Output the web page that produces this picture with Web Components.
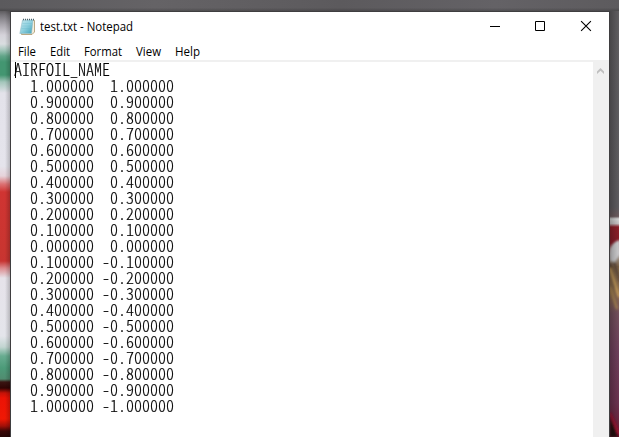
<!DOCTYPE html>
<html lang="en">
<head>
<meta charset="utf-8">
<title>test.txt - Notepad</title>
<style>
html,body{margin:0;height:100%;overflow:hidden}
body{font:12px "Open Sans","Noto Sans",sans-serif;color:#000}
</style>
</head>
<body>
<desk-top>
  <notepad-window>
    <title-bar slot="title">test.txt - Notepad</title-bar>
    <menu-bar slot="menu">
      <menu-item style="--w:18px;--g:14px">File</menu-item>
      <menu-item style="--w:20px;--g:14px">Edit</menu-item>
      <menu-item style="--w:38px;--g:14px">Format</menu-item>
      <menu-item style="--w:25px;--g:14px">View</menu-item>
      <menu-item style="--w:25px;--g:0px">Help</menu-item>
    </menu-bar>
    <text-editor></text-editor>
    <scroll-bar slot="scroll"></scroll-bar>
  </notepad-window>
</desk-top>
<script>
const define = (name, html, init) => customElements.define(name, class extends HTMLElement {
  constructor() {
    super();
    this.attachShadow({ mode: 'open' }).innerHTML = html;
    if (init) init(this);
  }
});

define('desk-top', `
<style>
:host{display:grid;grid-template:11px 1fr / 10px 600px 9px;width:619px;height:437px;overflow:hidden;background:#5f5d60}
.top{grid-column:1/4;background:linear-gradient(#0000 70%,#0003),linear-gradient(90deg,#5b5a5d,#656366 25%,#5c5a5d 55%,#646266 80%,#5d5b5e)}
.left{background:linear-gradient(90deg,transparent 50%,#0003),linear-gradient(#5e5c5f 0,#77757a 4px,#aaa7ae 14px,#d5d3da 24px,#d9dde0 33px,#a4c6bb 39px,#62a589 45px,#439671 51px,#439671 64px,#a4c6bb 71px,#e3e2ea 82px,#e5e4ec 155px,#e6d3da 165px,#dc7274 173px,#d03432 181px,#c93530 240px,#c83431 250px,#dc8a8d 257px,#e6e3ea 267px,#e4e5eb 325px,#c2d5d1 336px,#68ac90 345px,#4c9b79 357px,#518c70 368px,#3a1512 371px,#300504 377px,#c61207 382px,#ec1305 387px,#f01804 408px,#a21008 415px,#3b0706 420px,#250505 426px)}
svg{display:block}
</style>
<div class="top"></div><div class="left"></div><slot></slot>
<svg width="9" height="426" viewBox="610 11 9 426">
  <defs>
    <linearGradient id="b" x1="0" y1="0" x2="0" y2="1">
      <stop offset="0" stop-color="#605e61"/><stop offset=".46" stop-color="#5e5c60"/><stop offset=".482" stop-color="#6c5b5e"/>
      <stop offset=".488" stop-color="#d5d6d6"/><stop offset=".499" stop-color="#c6c2c3"/><stop offset=".507" stop-color="#8c1f29"/>
      <stop offset=".545" stop-color="#861d29"/><stop offset=".57" stop-color="#aaa3a2"/><stop offset=".6" stop-color="#7a6044"/>
      <stop offset=".66" stop-color="#8d6e4c"/><stop offset=".71" stop-color="#74505d"/><stop offset=".8" stop-color="#6f405c"/>
      <stop offset=".92" stop-color="#6c3350"/><stop offset="1" stop-color="#6b1a2f"/>
    </linearGradient>
    <linearGradient id="s"><stop offset="0" stop-opacity=".25"/><stop offset="1" stop-opacity="0"/></linearGradient>
    <filter id="f"><feGaussianBlur stdDeviation=".8"/></filter>
  </defs>
  <rect x="610" y="11" width="9" height="426" fill="url(#b)"/>
  <g filter="url(#f)" fill="none">
    <path d="M610 261V249Q613 241 620 240V254L615 262Z" fill="#cbcbcd"/>
    <path d="M610 263L615 288M614 262L620 282" stroke="#4e3c36" stroke-width="1.5"/>
    <path d="M610 268L619 297" stroke="#d8ac62" stroke-width="1.8"/>
    <path d="M610 287L617 309" stroke="#b08c54" stroke-width="2"/>
    <path d="M610 417L618 437H610Z" fill="#24070d"/>
    <path d="M610 413L619 434" stroke="#a30f2d" stroke-width="2"/>
  </g>
  <rect x="610" y="11" width="9" height="426" fill="url(#s)"/>
</svg>`);

define('notepad-window', `
<style>
:host{display:grid;box-sizing:border-box;grid-template:30px 18px 2px 1fr / 1fr 16px;border:1px solid #3f3e40;border-bottom:0;background:#fff;min-height:0}
slot[name=title]::slotted(*),slot[name=menu]::slotted(*){grid-column:1/3}
.rule{grid-column:1/3;background:#f0f0f0}
</style>
<slot name="title"></slot><slot name="menu"></slot><div class="rule"></div><slot></slot><slot name="scroll"></slot>`);

define('title-bar', `
<style>
:host{display:flex;height:30px;align-items:center}
.icon{margin:0 4px 0 8px;flex:none}
.t{flex:1;line-height:30px}
.t svg{display:block}
.b{flex:none}
</style>
<svg class="icon" width="17" height="18" viewBox="0 0 17 18">
  <defs><linearGradient id="p" x1="0" y1="0" x2="1" y2="1"><stop offset="0" stop-color="#c7e8ef"/><stop offset=".5" stop-color="#8fd0de"/><stop offset="1" stop-color="#3f9fb6"/></linearGradient></defs>
  <path d="M4 2.5H15.5V14L13 16.5H2.5Z" fill="#f5eedb" stroke="#a79468" stroke-width=".8"/>
  <path d="M3.5 2H14L12.5 15.5H.8Z" fill="url(#p)" stroke="#8bb7c2" stroke-width=".5"/>
  <path d="M3.5 5.5H13M3 8H12.6M2.6 10.5H12.2" stroke="#64b5c8" stroke-width=".5" opacity=".6"/>
  <path d="M4 1.5H15" stroke="#49616a" stroke-width="1.6" stroke-dasharray="1 1"/>
</svg>
<span class="t"><svg width="130" height="30"><text x="0" y="19" font-size="12" textLength="93" lengthAdjust="spacingAndGlyphs"></text></svg></span>
<svg class="b" width="45" height="30" viewBox="0 0 45 30"><path d="M18 14.5H28" stroke="#000"/></svg>
<svg class="b" width="46" height="30" viewBox="0 0 46 30"><path d="M18.5 9.5H27.5V18.5H18.5Z" fill="none" stroke="#000"/></svg>
<svg class="b" width="46" height="30" viewBox="0 0 46 30"><path d="M18.1 9.1L27.9 18.9M27.9 9.1L18.1 18.9" fill="none" stroke="#000" stroke-width="1.1"/></svg>`,
el => { el.shadowRoot.querySelector('text').textContent = 'test.txt - Notepad'; });

define('menu-bar', `<style>:host{display:flex;padding-left:7px;height:18px}</style><slot></slot>`);

customElements.define('menu-item', class extends HTMLElement {
  connectedCallback() {
    const w = parseInt(this.style.getPropertyValue('--w'));
    this.attachShadow({ mode: 'open' }).innerHTML = `
<style>:host{display:block;width:var(--w);margin-right:var(--g)}svg{display:block;overflow:visible}</style>
<svg width="${w}" height="18"><text x="0" y="14" font-size="12" textLength="${w}" lengthAdjust="spacingAndGlyphs">${this.textContent}</text></svg>`;
  }
});

define('text-editor', `
<style>
:host{display:block;position:relative;font:300 17px/16px "Noto Sans CJK JP",monospace;font-feature-settings:"hwid"}
pre{font:inherit;margin:-1px 0 0 3.3px;transform:scaleX(.941176);transform-origin:0 0;-webkit-text-stroke:.2px #000}
.caret{position:absolute;left:4px;top:0;width:1px;height:16px;background:#000}
</style><div class="caret"></div><pre></pre>`,
el => {
  const lines = ['AIRFOIL_NAME'];
  for (let i = 10; i >= 0; i--) { const n = (i / 10).toFixed(6); lines.push(`  ${n}  ${n}`); }
  for (let i = 1; i <= 10; i++) { const n = (i / 10).toFixed(6); lines.push(`  ${n} -${n}`); }
  el.shadowRoot.querySelector('pre').textContent = lines.join('\n');
});

define('scroll-bar', `
<style>:host{display:block;background:#f0f0f0}svg{display:block}</style>
<svg width="16" height="20"><path d="M4 9.5L7.5 6L11 9.5V12L7.5 8.7L4 12Z" fill="#bfbfbf"/></svg>`);
</script>
</body>
</html>
